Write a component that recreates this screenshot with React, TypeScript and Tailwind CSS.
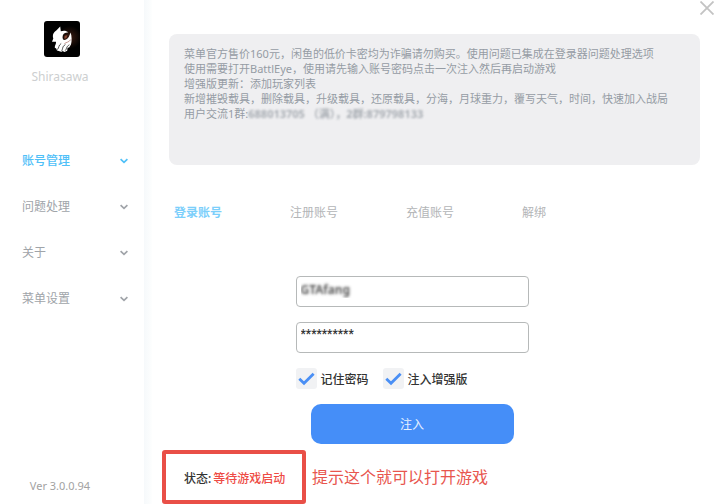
import { useState } from "react";

const menu = ["账号管理", "问题处理", "关于", "菜单设置"];
const tabs = ["登录账号", "注册账号", "充值账号", "解绑"];
const notice = [
  "菜单官方售价160元，闲鱼的低价卡密均为诈骗请勿购买。使用问题已集成在登录器问题处理选项",
  "使用需要打开BattlEye，使用请先输入账号密码点击一次注入然后再启动游戏",
  "增强版更新：添加玩家列表",
  "新增摧毁载具，删除载具，升级载具，还原载具，分海，月球重力，覆写天气，时间，快速加入战局",
];

function Logo() {
  return (
    <svg viewBox="0 0 36 36" className="size-9" role="img" aria-label="Shirasawa">
      <defs>
        <radialGradient id="glow" cx="0.72" cy="0.45" r="0.32">
          <stop offset="0" stopColor="#3a1c12" />
          <stop offset="1" stopColor="#000" />
        </radialGradient>
      </defs>
      <rect width="36" height="36" rx="3" fill="url(#glow)" />
      <path
        d="M16.2 5.5 L16.8 10.3 C19.5 9.2 22.5 9.6 24.3 11.3 L21 12 C18.6 13 18 16 19 18.6 C21.5 20 24.6 17.5 25.6 14 L26.6 11.5 C27.8 15 28 20 27 23.5 L25.2 26.5 L23.6 26.8 L23.2 29.8 L20.5 31 L18.6 30 L17.6 31 L14.8 30 L13 29.6 L12.2 27.6 L10.8 26.8 C10.6 24.5 12.4 22.8 12 20.8 L8 20.8 L9.3 17.5 C8.2 13.8 9.5 11.5 12.3 9.5 Z"
        fill="#fff"
      />
      <path d="M20.3 17.8 L20.6 14.8 L23.4 14.2 L22.4 17.2 Z" fill="#8a4632" />
      <path
        d="M17.2 22.5 C14.2 24.5 15.4 26.3 13.4 28.6 M21.4 23.5 C17.8 25.8 19.2 27.8 17.4 30.4 M25.4 23.8 C21.8 25.8 23.2 27.4 21.2 29.6"
        fill="none"
        stroke="#222"
        strokeWidth="0.8"
      />
      <path d="M26.8 18.5 C25 21.3 22.4 21.2 20.4 22.6" fill="none" stroke="#b98078" strokeWidth="0.8" />
    </svg>
  );
}

function Chevron() {
  return (
    <svg viewBox="0 0 8 6" className="h-[6px] w-2" fill="none" stroke="currentColor" strokeWidth="1.7" aria-hidden="true">
      <path d="M0.6 1.2 L4 4.4 L7.4 1.2" />
    </svg>
  );
}

function Check({ label }: { label: string }) {
  const [on, setOn] = useState(true);
  return (
    <label className="flex items-center gap-1">
      <span className="grid size-[21px] place-items-center rounded-[3px] bg-[#f1f2f4]">
        <input
          type="checkbox"
          checked={on}
          onChange={() => setOn(!on)}
          className="peer col-start-1 row-start-1 size-[21px] appearance-none"
        />
        <svg
          viewBox="0 0 21 21"
          className="pointer-events-none invisible col-start-1 row-start-1 size-[21px] peer-checked:visible"
          fill="none"
          stroke="#4a8ff5"
          strokeWidth="2.8"
          aria-hidden="true"
        >
          <path d="M3.3 10.8 L8 15.3 L17.6 5.8" />
        </svg>
      </span>
      <span className="pt-0.5">{label}</span>
    </label>
  );
}

export default function App() {
  const [user, setUser] = useState("GTAfang");
  const [pass, setPass] = useState("**********");
  const [tab, setTab] = useState(0);
  const [section, setSection] = useState(0);

  return (
    <div className="flex min-h-screen bg-white font-['Noto_Sans','Noto_Sans_CJK_SC',sans-serif] text-[12px] leading-4 text-[#333]">
      <aside className="flex w-36 shrink-0 flex-col pt-[21px] pb-[10px]">
        <div className="flex flex-col items-center gap-3 pr-5 text-[#cdcfd0]">
          <Logo />
          <span className="pr-1">Shirasawa</span>
        </div>
        <nav className="mt-[53px] flex flex-col pr-4 pl-[22px]">
          {menu.map((name, i) => (
            <button
              key={name}
              type="button"
              onClick={() => setSection(i)}
              className={`flex h-[46px] items-center justify-between ${
                i === section ? "font-medium text-[#4fc0f8]" : "text-[#a0a4a9]"
              }`}
            >
              {name}
              <Chevron />
            </button>
          ))}
        </nav>
        <p className="mt-auto pr-6 text-center text-[11px] text-[#a2a2a2]">Ver 3.0.0.94</p>
      </aside>
      <div className="w-2 shrink-0 bg-linear-to-r from-[#f6f9fb] to-[#fdfefe]" />

      <main className="flex min-w-0 flex-1 flex-col">
        <header className="flex h-[34px] items-start justify-end pt-px pr-1">
          <button type="button" aria-label="关闭" className="text-[#c3c3c3]">
            <svg viewBox="0 0 14 14" className="size-[14px]" fill="none" stroke="currentColor" strokeWidth="1.8">
              <path d="M0.5 0.5 L13.5 13.5 M13.5 0.5 L0.5 13.5" />
            </svg>
          </button>
        </header>

        <section className="mr-[18px] ml-[17px] min-h-[131px] rounded-lg bg-[#efeff1] px-[15px] pt-[12px] pb-3 text-[11px] leading-[15px] text-[#959ca4]">
          {notice.map((line) => (
            <p key={line}>{line}</p>
          ))}
          <p>
            用户交流1群:<span className="font-bold text-[#a9aeb4] blur-[1px]">688013705 （满），2群:879798133</span>
          </p>
        </section>

        <div role="tablist" className="mt-10 ml-[22px] flex">
          {tabs.map((name, i) => (
            <button
              key={name}
              type="button"
              role="tab"
              aria-selected={i === tab}
              onClick={() => setTab(i)}
              className={`w-[116px] text-left ${i === tab ? "font-bold text-[#7ccffb]" : "text-[#b3b5b7]"}`}
            >
              {name}
            </button>
          ))}
        </div>

        <form className="mt-[55px] mr-[63px] ml-[17px] flex flex-col items-center" onSubmit={(e) => e.preventDefault()}>
          <div className="flex w-[233px] flex-col gap-[15px]">
            <input
              aria-label="账号"
              value={user}
              onChange={(e) => setUser(e.target.value)}
              className="h-[31px] rounded border border-[#b6b9b9] px-1 pb-[5px] font-semibold text-transparent caret-[#333] outline-none text-shadow-[0_0_3px_#444]"
            />
            <input
              aria-label="密码"
              value={pass}
              onChange={(e) => setPass(e.target.value)}
              className="h-[31px] rounded border border-[#b6b9b9] px-1 pb-2 font-[Roboto,sans-serif] font-medium text-[#333] outline-none"
            />
            <div className="flex gap-3.5 font-medium">
              <Check label="记住密码" />
              <Check label="注入增强版" />
            </div>
          </div>
          <button type="submit" className="mt-[15px] h-10 w-[203px] rounded-[10px] bg-[#458ef8] pt-0.5 text-[#e6f0ff]">
            注入
          </button>
        </form>

        <div className="mt-[6px] ml-[10px] flex items-center gap-1.5">
          <p className="flex h-[54px] w-[144px] items-center rounded-[3px] border-4 border-[#e94f47] pt-[3px] pl-[18px] font-medium">
            <span>状态:</span>
            <span className="ml-0.5 text-[#ee4b45]">等待游戏启动</span>
          </p>
          <span className="text-[16px] leading-5 text-[#e8564e]">提示这个就可以打开游戏</span>
        </div>
      </main>
    </div>
  );
}
